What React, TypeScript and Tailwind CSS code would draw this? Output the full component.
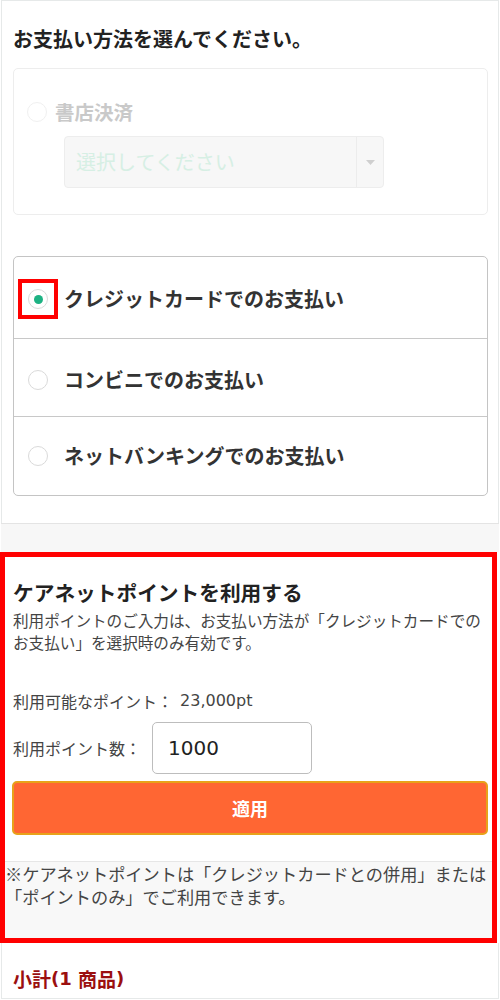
import React from "react";

function Radio({ checked, disabled }: { checked?: boolean; disabled?: boolean }) {
  return (
    <span
      className={
        disabled
          ? "flex h-5 w-5 shrink-0 items-center justify-center rounded-full border border-[#f0f0f0] bg-white"
          : "flex h-5 w-5 shrink-0 items-center justify-center rounded-full border border-[#dadada] bg-white"
      }
    >
      {checked && <span className="h-[9px] w-[9px] rounded-full bg-[#1db283]" />}
    </span>
  );
}

export default function App() {
  return (
    <div className="w-[500px] bg-white font-['Noto_Sans_CJK_JP','Noto_Sans',sans-serif] text-[#333]">
      {/* Payment method section */}
      <div className="ml-[1px] w-[498px] border-x border-t border-[#e6e9e9] pl-[11px] pr-[10px] pt-[24px] pb-[27px]">
        <h2 className="text-[20px] font-bold leading-[28px] text-[#222]">お支払い方法を選んでください。</h2>

        <div className="mt-[15px] rounded-[5px] border border-[#ededed] pl-[13px] pt-[33px] pb-[26px]">
          <div className="flex items-center gap-[8px]">
            <Radio disabled />
            <span className="text-[19.5px] font-bold leading-[20px] text-[#c9c9c9]">書店決済</span>
          </div>
          <div className="ml-[37px] mt-[14px] flex h-[52px] w-[320px] items-stretch rounded-[4px] border border-[#ededed] bg-[#f7f7f7]">
            <div className="flex flex-1 items-center pl-[11px] text-[20px] leading-none text-[#d6efe4]">選択してください</div>
            <div className="flex w-[27px] items-center justify-center border-l border-[#ececec]">
              <svg width="9" height="5" viewBox="0 0 9 5">
                <path d="M0 0 L9 0 L4.5 5 Z" fill="#cfcfcf" />
              </svg>
            </div>
          </div>
        </div>

        <div className="mt-[41px] rounded-[5px] border border-[#c4c4c4]">
          <div className="flex h-[81px] items-center gap-[16px] pl-[14px] pt-[3px]">
            <span className="relative">
              <Radio checked />
              <span className="absolute -left-[10px] -top-[10px] h-[40px] w-[40px] border-4 border-[#ff0000]" />
            </span>
            <span className="text-[20px] font-bold leading-[24px]">クレジットカードでのお支払い</span>
          </div>
          <div className="flex h-[78px] items-center gap-[16px] border-t border-[#c8c8c8] pl-[14px] pt-[4px]">
            <Radio />
            <span className="text-[20px] font-bold leading-[24px]">コンビニでのお支払い</span>
          </div>
          <div className="flex h-[79px] items-center gap-[16px] border-t border-[#c8c8c8] pl-[14px]">
            <Radio />
            <span className="text-[20px] font-bold leading-[24px]">ネットバンキングでのお支払い</span>
          </div>
        </div>
      </div>

      {/* gray strip */}
      <div className="ml-[1px] h-[29px] w-[498px] border-t border-[#e4e4e4] bg-[#f7f7f7]" />

      {/* Points section (highlighted) */}
      <div className="w-[497px] border-[5px] border-[#ff0000] bg-white">
        <div className="pl-[8px] pr-[4px] pt-[21px] pb-[26px]">
          <h3 className="text-[20.7px] font-bold leading-[28px] text-[#222]">ケアネットポイントを利用する</h3>
          <p className="mt-[3px] pr-[4px] text-[15.6px] leading-[22px] text-[#444]">
            利用ポイントのご入力は、お支払い方法が「クレジットカードでのお支払い」を選択時のみ有効です。
          </p>
          <div className="mt-[37px] flex h-[22px] items-center text-[16px] text-[#444]">
            <span className="leading-[22px]">利用可能なポイント：</span>
            <span className="ml-[7px] font-['DejaVu_Sans',sans-serif] text-[16px] leading-[22px]">23,000pt</span>
          </div>
          <div className="mt-[10px] flex items-center">
            <span className="text-[16px] leading-[22px] text-[#444]">利用ポイント数：</span>
            <div className="ml-[11px] flex h-[52px] w-[160px] items-center rounded-[5px] border border-[#bdbdbd] pl-[15px] font-['DejaVu_Sans',sans-serif] text-[20px] text-[#222]">
              1000
            </div>
          </div>
          <button className="-ml-[1px] mt-[7px] flex h-[54px] w-[476px] items-center justify-center rounded-[5px] border-2 border-[#e8a21a] bg-[#ff6633] text-[18px] font-bold text-white">
            適用
          </button>
        </div>
        <div className="border-t border-[#e6e6e6] bg-[#f8f8f8] pb-[30px] pr-[2px]">
          <p className="text-[17.2px] leading-[23px] text-[#444]">
            ※ケアネットポイントは「クレジットカードとの併用」または「ポイントのみ」でご利用できます。
          </p>
        </div>
      </div>

      {/* Subtotal */}
      <div className="ml-[1px] h-[56px] w-[498px] border-x border-b border-[#e6e9e9] pl-[11px] pt-[23px]">
        <div className="flex h-[26px] items-center text-[19px] font-bold text-[#9b0f0f]">
          <span className="leading-[26px]">小計</span>
          <span className="font-['DejaVu_Sans',sans-serif] text-[18px] leading-[26px]">(1&nbsp;</span>
          <span className="leading-[26px]">商品</span>
          <span className="font-['DejaVu_Sans',sans-serif] text-[18px] leading-[26px]">)</span>
        </div>
      </div>
    </div>
  );
}
